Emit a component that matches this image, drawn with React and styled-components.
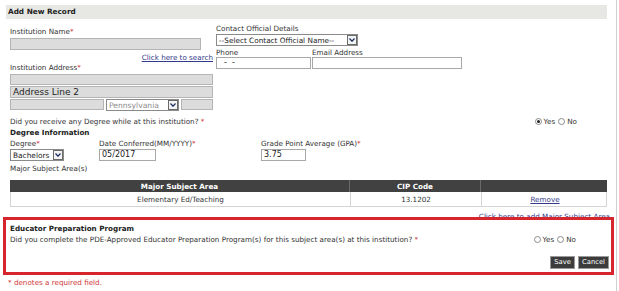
import React from 'react';
import styled, { createGlobalStyle } from 'styled-components';

const GlobalStyle = createGlobalStyle`
  html, body {
    margin: 0;
    padding: 0;
    background: #fff;
  }
  body {
    font-family: "DejaVu Sans", Verdana, sans-serif;
    font-size: 7.2px;
    color: #333;
  }
`;

const Page = styled.div`
  width: 617px;
  min-height: 291px;
  border-right: 1px solid #cfcfcf;
  padding-top: 5px;
  box-sizing: border-box;
`;

const Header = styled.div`
  margin: 0 9px 0 6px;
  height: 14px;
  line-height: 14px;
  padding-left: 2px;
  background: #e7e7e3;
  font-weight: bold;
  font-size: 7.3px;
  color: #222;
`;

const Body = styled.div`
  padding-left: 10px;
  width: 597px;
`;

const TopSection = styled.div`
  display: flex;
  gap: 3px;
`;

const Column = styled.div`
  display: flex;
  flex-direction: column;
  width: ${({ w }) => w}px;
  padding-top: ${({ pt }) => pt || 0}px;
`;

const Label = styled.div`
  line-height: 9px;
  height: 9px;
  margin-top: ${({ mt }) => mt || 0}px;
  white-space: nowrap;
  font-weight: ${({ bold }) => (bold ? 'bold' : 'normal')};
  color: ${({ bold }) => (bold ? '#222' : '#333')};
`;

const Req = styled.span`
  color: #d23a3a;
`;

const Input = styled.div`
  box-sizing: border-box;
  width: ${({ w }) => w}px;
  height: ${({ h }) => h || 12}px;
  margin-top: ${({ mt }) => mt || 0}px;
  border: 1px solid ${({ disabled }) => (disabled ? '#b4b4b4' : '#a8a8a8')};
  background: ${({ disabled }) => (disabled ? '#dcdcdc' : '#fff')};
  font-size: ${({ fs }) => fs || 8}px;
  line-height: ${({ h }) => (h || 12) - 2}px;
  padding-left: 2px;
  white-space: nowrap;
  overflow: hidden;
  color: #222;
`;

const Select = styled.div`
  box-sizing: border-box;
  display: flex;
  align-items: center;
  justify-content: space-between;
  width: ${({ w }) => w}px;
  height: 12px;
  margin-top: ${({ mt }) => mt || 0}px;
  border: 1px solid #8a8a8a;
  background: #fff;
  font-size: ${({ fs }) => fs || 7.4}px;
  padding-left: 2px;
  color: ${({ muted }) => (muted ? '#8a8a8a' : '#222')};
  white-space: nowrap;
  overflow: hidden;
`;

const Arrow = styled.span`
  box-sizing: border-box;
  flex: none;
  display: flex;
  align-items: center;
  justify-content: center;
  width: 10px;
  height: 10px;
  border: 1px solid #6a6a6a;
  background: #f4f4f4;
`;

const Chevron = () => (
  <svg width="6" height="4" viewBox="0 0 6 4">
    <path d="M0.5 0.5 L3 3.2 L5.5 0.5" fill="none" stroke="#1a2a60" strokeWidth="1.2" />
  </svg>
);

const SearchLink = styled.a`
  align-self: flex-end;
  line-height: 9px;
  margin-top: 3px;
  color: #333a8a;
  text-decoration: underline;
  white-space: nowrap;
`;

const AddressRow = styled.div`
  display: flex;
  gap: 2px;
  margin-top: 1px;
`;

const FieldPair = styled.div`
  display: flex;
  gap: 1px;
`;

const Field = styled.div`
  display: flex;
  flex-direction: column;
  width: ${({ w }) => w}px;
`;

const QuestionRow = styled.div`
  display: flex;
  align-items: center;
  justify-content: space-between;
  height: 9px;
  margin-top: ${({ mt }) => mt || 0}px;
  margin-right: ${({ mr }) => mr || 0}px;
  white-space: nowrap;
`;

const Radios = styled.div`
  display: flex;
  align-items: center;
  gap: 2px;
`;

const Radio = styled.span`
  box-sizing: border-box;
  display: inline-flex;
  align-items: center;
  justify-content: center;
  width: 7px;
  height: 7px;
  border: 1px solid #8a8a8a;
  border-radius: 50%;
  background: #fff;
  margin-left: ${({ ml }) => ml || 0}px;

  &::after {
    content: '';
    display: ${({ checked }) => (checked ? 'block' : 'none')};
    width: 3px;
    height: 3px;
    border-radius: 50%;
    background: #222;
  }
`;

const DegreeRow = styled.div`
  display: flex;
  margin-top: 2px;
`;

const Table = styled.div`
  margin-top: 7px;
  width: 597px;
`;

const TableRow = styled.div`
  display: grid;
  grid-template-columns: 339px 131px 127px;
  height: ${({ head }) => (head ? 12 : 15)}px;
  background: ${({ head }) => (head ? '#414141' : '#fff')};
  color: ${({ head }) => (head ? '#fff' : '#333')};
  font-weight: ${({ head }) => (head ? 'bold' : 'normal')};
  box-sizing: border-box;
  border: ${({ head }) => (head ? 'none' : '1px solid #d4d4d4')};
  border-top: none;
`;

const Cell = styled.div`
  display: flex;
  align-items: center;
  justify-content: center;
  border-left: ${({ first, head }) =>
    first ? 'none' : head ? '1px solid #6a6a6a' : '1px solid #d4d4d4'};
`;

const Link = styled.a`
  color: #333a8a;
  text-decoration: underline;
`;

const AddLink = styled.a`
  display: block;
  text-align: right;
  margin-top: 5px;
  margin-right: -3px;
  line-height: 9px;
  color: #333a8a;
  text-decoration: underline;
  white-space: nowrap;
`;

const RedBox = styled.div`
  position: relative;
  margin: -4px 0 0 3px;
  width: 611px;
  height: 58px;
  box-sizing: border-box;
  border: 3px solid #d6252d;
  background: #fff;
  padding: 4px 2px 0 4px;
`;

const ButtonBar = styled.div`
  display: flex;
  justify-content: flex-end;
  gap: 3px;
  margin-top: 12px;
`;

const Button = styled.button`
  box-sizing: border-box;
  height: 13px;
  padding: 0 3px;
  border: 1px solid #9a9a9a;
  background: #3c3c3c;
  color: #fff;
  font-family: "DejaVu Sans", Verdana, sans-serif;
  font-size: 6.8px;
  line-height: 11px;
  cursor: pointer;
`;

const Footer = styled.div`
  margin: 3px 0 0 8px;
  line-height: 9px;
  color: #d23a3a;
`;

export default function App() {
  return (
    <>
      <GlobalStyle />
      <Page>
        <Header>Add New Record</Header>
        <Body>
          <TopSection>
            <Column w={203} pt={0}>
              <Label mt={8}>
                Institution Name<Req>*</Req>
              </Label>
              <Input disabled w={191} mt={2} />
              <SearchLink>Click here to search</SearchLink>
              <Label mt={1}>
                Institution Address<Req>*</Req>
              </Label>
              <Input disabled w={203} h={11} mt={2} />
              <Input disabled w={203} mt={1} fs={9}>
                Address Line 2
              </Input>
              <AddressRow>
                <Input disabled w={94} h={11} />
                <Select w={73} muted fs={7.6}>
                  Pennsylvania
                  <Arrow>
                    <Chevron />
                  </Arrow>
                </Select>
                <Input disabled w={32} h={11} />
              </AddressRow>
            </Column>
            <Column w={246} pt={5}>
              <Label>Contact Official Details</Label>
              <Select w={142} mt={1} fs={7.3}>
                --Select Contact Official Name--
                <Arrow>
                  <Chevron />
                </Arrow>
              </Select>
              <Label mt={2}>
                <FieldPair>
                  <Field w={95}>Phone</Field>
                  <Field w={150}>Email Address</Field>
                </FieldPair>
              </Label>
              <FieldPair>
                <Input w={95}>&nbsp;&nbsp;-&nbsp;&nbsp;-</Input>
                <Input w={151} />
              </FieldPair>
            </Column>
          </TopSection>

          <QuestionRow mt={6} mr={30}>
            <span>
              Did you receive any Degree while at this institution? <Req>*</Req>
            </span>
            <Radios>
              <Radio checked /> Yes
              <Radio ml={1} /> No
            </Radios>
          </QuestionRow>

          <Label bold mt={2}>
            Degree Information
          </Label>
          <DegreeRow>
            <Field w={89}>
              <Label>
                Degree<Req>*</Req>
              </Label>
              <Select w={54} mt={1}>
                Bachelors
                <Arrow>
                  <Chevron />
                </Arrow>
              </Select>
            </Field>
            <Field w={162}>
              <Label>
                Date Conferred(MM/YYYY)<Req>*</Req>
              </Label>
              <Input w={57} mt={1}>
                05/2017
              </Input>
            </Field>
            <Field w={120}>
              <Label>
                Grade Point Average (GPA)<Req>*</Req>
              </Label>
              <Input w={45} mt={1}>
                3.75
              </Input>
            </Field>
          </DegreeRow>
          <Label mt={3}>Major Subject Area(s)</Label>

          <Table>
            <TableRow head>
              <Cell head first>Major Subject Area</Cell>
              <Cell head>CIP Code</Cell>
              <Cell head />
            </TableRow>
            <TableRow>
              <Cell first>Elementary Ed/Teaching</Cell>
              <Cell>13.1202</Cell>
              <Cell>
                <Link>Remove</Link>
              </Cell>
            </TableRow>
          </Table>
          <AddLink>Click here to add Major Subject Area</AddLink>
        </Body>

        <RedBox>
          <Label bold>Educator Preparation Program</Label>
          <QuestionRow mt={2} mr={33}>
            <span>
              Did you complete the PDE-Approved Educator Preparation Program(s) for this subject
              area(s) at this institution? <Req>*</Req>
            </span>
            <Radios>
              <Radio /> Yes
              <Radio ml={1} /> No
            </Radios>
          </QuestionRow>
          <ButtonBar>
            <Button>Save</Button>
            <Button>Cancel</Button>
          </ButtonBar>
        </RedBox>
        <Footer>* denotes a required field.</Footer>
      </Page>
    </>
  );
}
